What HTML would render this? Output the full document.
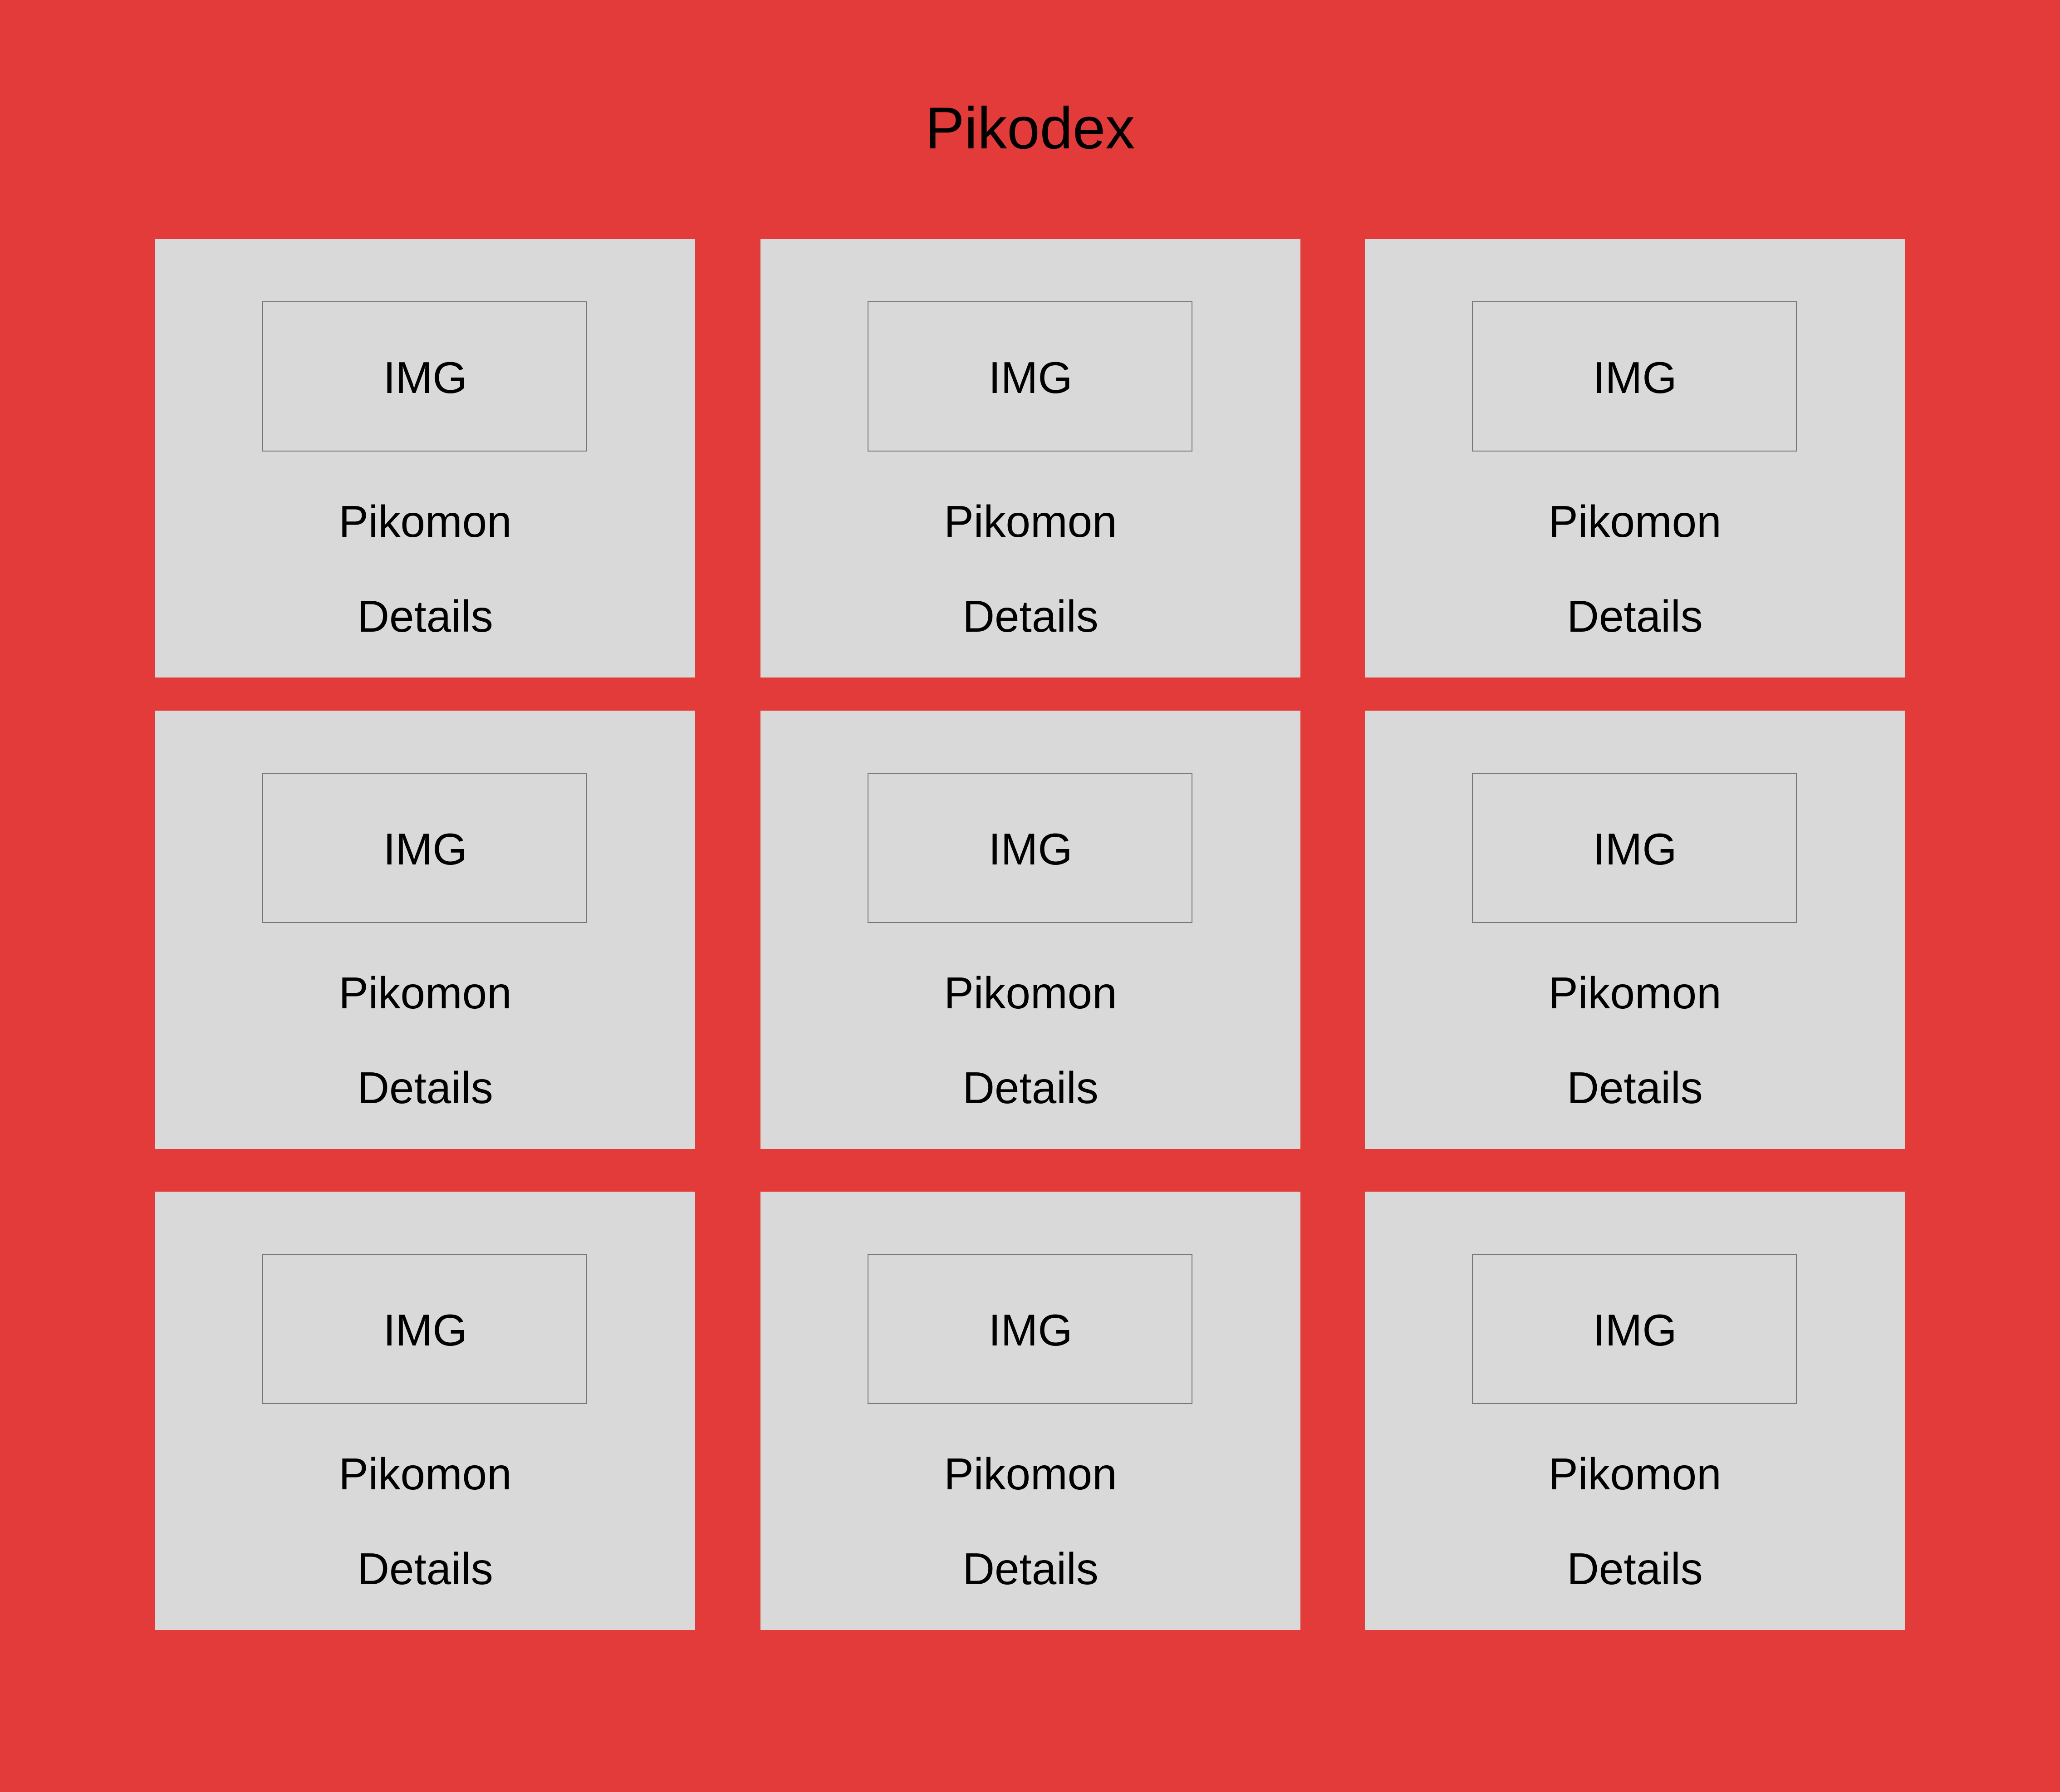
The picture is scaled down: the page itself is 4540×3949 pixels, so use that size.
<!DOCTYPE html>
<html><head><meta charset="utf-8"><style>
html,body{margin:0;padding:0}
body{width:4540px;height:3949px;background:#e33a3a;position:relative;overflow:hidden;font-family:"Liberation Sans",sans-serif;color:#000}
.t{position:absolute;left:0;width:4540px;top:217px;text-align:center;font-size:130px;line-height:130px}
.c{position:absolute;width:1190px;height:966px;background:#d9d9d9}
.b{position:absolute;left:236px;top:137px;width:716px;height:331px;border:2px solid #777;box-sizing:border-box}
.x{position:absolute;left:0;width:100%;text-align:center;font-size:98px;line-height:98px}
</style></head><body>
<div class="t">Pikodex</div>
<div class="c" style="left:342px;top:527px"><div class="b"></div><div class="x" style="top:256px">IMG</div><div class="x" style="top:573px">Pikomon</div><div class="x" style="top:782px">Details</div></div>
<div class="c" style="left:1676px;top:527px"><div class="b"></div><div class="x" style="top:256px">IMG</div><div class="x" style="top:573px">Pikomon</div><div class="x" style="top:782px">Details</div></div>
<div class="c" style="left:3008px;top:527px"><div class="b"></div><div class="x" style="top:256px">IMG</div><div class="x" style="top:573px">Pikomon</div><div class="x" style="top:782px">Details</div></div>
<div class="c" style="left:342px;top:1566px"><div class="b"></div><div class="x" style="top:256px">IMG</div><div class="x" style="top:573px">Pikomon</div><div class="x" style="top:782px">Details</div></div>
<div class="c" style="left:1676px;top:1566px"><div class="b"></div><div class="x" style="top:256px">IMG</div><div class="x" style="top:573px">Pikomon</div><div class="x" style="top:782px">Details</div></div>
<div class="c" style="left:3008px;top:1566px"><div class="b"></div><div class="x" style="top:256px">IMG</div><div class="x" style="top:573px">Pikomon</div><div class="x" style="top:782px">Details</div></div>
<div class="c" style="left:342px;top:2626px"><div class="b"></div><div class="x" style="top:256px">IMG</div><div class="x" style="top:573px">Pikomon</div><div class="x" style="top:782px">Details</div></div>
<div class="c" style="left:1676px;top:2626px"><div class="b"></div><div class="x" style="top:256px">IMG</div><div class="x" style="top:573px">Pikomon</div><div class="x" style="top:782px">Details</div></div>
<div class="c" style="left:3008px;top:2626px"><div class="b"></div><div class="x" style="top:256px">IMG</div><div class="x" style="top:573px">Pikomon</div><div class="x" style="top:782px">Details</div></div>
</body></html>
